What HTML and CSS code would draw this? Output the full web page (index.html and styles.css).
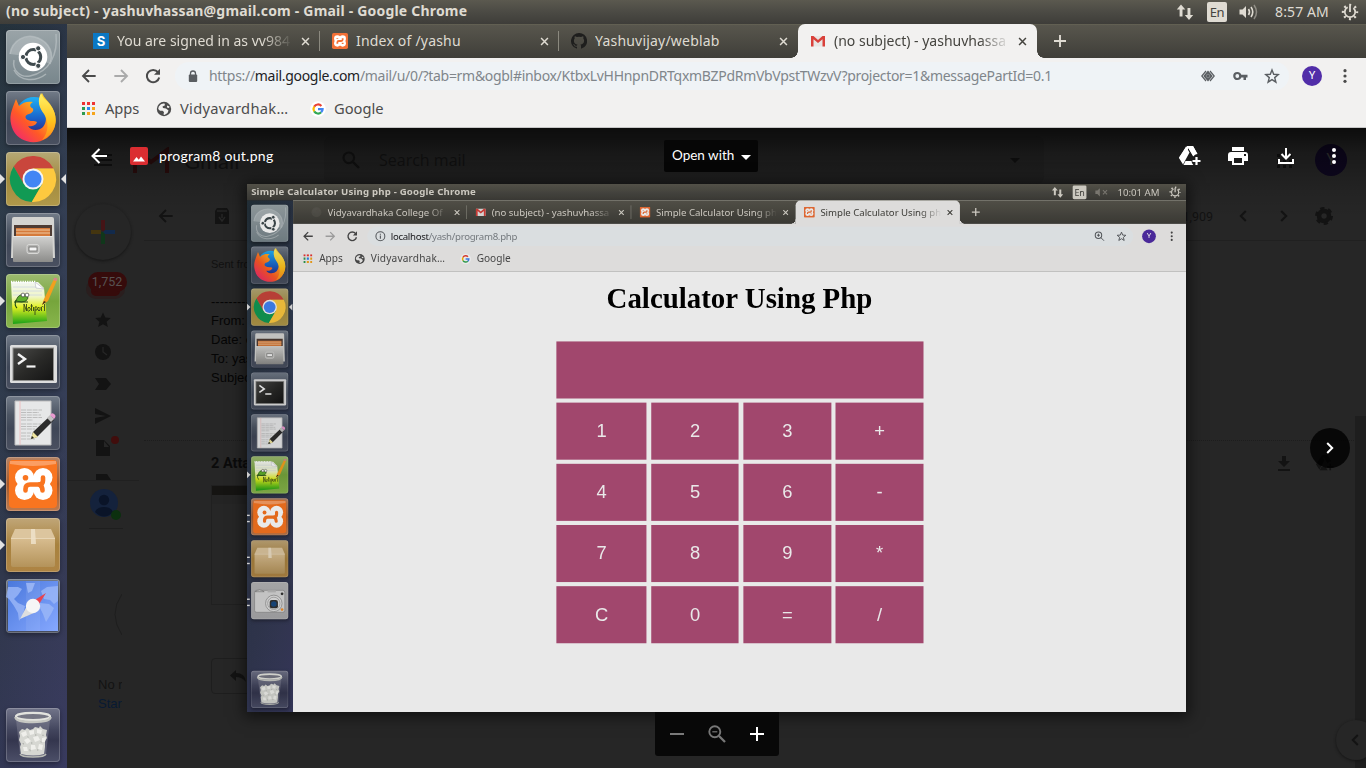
FILE: index.html
```html
<!DOCTYPE html>
<html lang="en">
<head>
<meta charset="utf-8">
<title>(no subject) - yashuvhassan@gmail.com - Gmail</title>
<link rel="stylesheet" href="styles.css">
</head>
<body>
<svg class="sprite" aria-hidden="true">
  <defs>
    <linearGradient id="gFox" x1="1" y1="0" x2="0.1" y2="1"><stop offset="0" stop-color="#fff24a"/><stop offset=".35" stop-color="#ffb21c"/><stop offset=".65" stop-color="#ff5a26"/><stop offset="1" stop-color="#f0207a"/></linearGradient>
    <linearGradient id="gTail" x1="0" y1="0" x2="0" y2="1"><stop offset="0" stop-color="#fff36a"/><stop offset=".6" stop-color="#ffc21c"/><stop offset="1" stop-color="#ff8a1c"/></linearGradient>
    <linearGradient id="gGlobe" x1="0" y1="0" x2="0" y2="1"><stop offset="0" stop-color="#1fb0f5"/><stop offset=".6" stop-color="#1a62c9"/><stop offset="1" stop-color="#2a2a86"/></linearGradient>
    <linearGradient id="gSteel" x1="0" y1="0" x2="0" y2="1"><stop offset="0" stop-color="#d2d2d0"/><stop offset="1" stop-color="#8c8c8a"/></linearGradient>
    <linearGradient id="gNote" x1="0" y1="0" x2="0" y2="1"><stop offset="0" stop-color="#f2f6f0"/><stop offset=".35" stop-color="#f0f6c8"/><stop offset=".6" stop-color="#e2f020"/><stop offset="1" stop-color="#18a018"/></linearGradient>
    <linearGradient id="gTerm" x1="0" y1="0" x2="1" y2="1"><stop offset="0" stop-color="#4a4a48"/><stop offset=".5" stop-color="#2a2a28"/><stop offset="1" stop-color="#141414"/></linearGradient>
    <linearGradient id="gBox" x1="0" y1="0" x2="0" y2="1"><stop offset="0" stop-color="#d8bd90"/><stop offset="1" stop-color="#b4935a"/></linearGradient>
    <linearGradient id="gMap" x1="0" y1="0" x2="1" y2="1"><stop offset="0" stop-color="#4a78dc"/><stop offset="1" stop-color="#86a8ff"/></linearGradient>
  </defs>

  <symbol id="app-dash" viewBox="0 0 54 54">
    <g fill="none" stroke="#b4bcbf" stroke-width="1.5" opacity=".8"><path d="M4 24C6 10 20 3 32 8c12 5 16 16 12 26"/><path d="M50 4c2 20-6 38-26 42C14 48 6 40 8 30"/><path d="M8 40c6 12 22 12 32 4"/></g>
    <path d="M4 24C6 10 20 3 32 8c12 5 16 16 12 26L27 27z" fill="#c3cacc" opacity=".45"/>
    <circle cx="27" cy="27" r="14.3" fill="#fff"/>
    <circle cx="27.3" cy="27" r="7.4" fill="none" stroke="#3f4a4e" stroke-width="3" stroke-dasharray="13.3 2.2" stroke-dashoffset="6.6"/>
    <g fill="#3f4a4e" stroke="#fff" stroke-width="1"><circle cx="17" cy="27" r="2.600"/><circle cx="32.200" cy="18.300" r="2.600"/><circle cx="32.200" cy="35.800" r="2.600"/></g>
  </symbol>
  <symbol id="app-firefox" viewBox="0 0 54 54">
    <circle cx="28" cy="24" r="18" fill="url(#gGlobe)"/>
    <path d="M10 8l3 7c4-4 9-5 14-4-3 2-4 4-1 6 2 1 2 4-3 6-5 1-4 5-1 6 4 2 6 0 9 2-1 4-7 5-9 4 3 5 11 5 15 1 5-6 3-14-2-19-3-6-2-11 1-15 2 5 6 8 8 11 9 12 7 26-3 34-12 8-28 4-34-8-5-12-2-18 3-31z" fill="url(#gFox)"/>
    <path d="M35 2c1 6 7 8 10 13 9 13 4 29-9 34 7-8 7-18 2-26-5-7-7-13-3-21z" fill="url(#gTail)"/>
  </symbol>
  <symbol id="app-chrome" viewBox="0 0 54 54">
    <path d="M7.7 14.5A23 23 0 0 1 47.5 16.5H27L17.9 32.25z" fill="#c9463c"/>
    <path d="M25.8 50A23 23 0 0 1 7.7 14.5L17.9 32.25H36.1z" fill="#119a54"/>
    <path d="M27 16.5H47.5A23 23 0 0 1 25.8 50L36.1 32.25z" fill="#fdc93f"/>
    <circle cx="27" cy="27" r="10.5" fill="#f5f5f2"/><circle cx="27" cy="27" r="8.6" fill="#4285f4"/>
  </symbol>
  <symbol id="app-files" viewBox="0 0 54 54">
    <path d="M6 6q0-2 2-2h38q2 0 2 2l1 39H5z" fill="#d4d4d1"/><path d="M8 12h38v13H8z" fill="#4e3c34"/>
    <path d="M10 15h34v8H10z" fill="#d57a3a"/><path d="M10 17h34M10 20h34" stroke="#f0c9a0" stroke-width="1"/>
    <path d="M7 23h39.5l.5 25q0 1-1 1H8q-1 0-1-1z" fill="url(#gSteel)"/><path d="M7 23.500h39.500" stroke="#e6e6e4"/>
    <rect x="21" y="31.500" width="12" height="9" rx="2" fill="#b4b4b2" stroke="#d8d8d6"/><rect x="23" y="34" width="8" height="4" fill="#f4f4f4" stroke="#6a6a68" stroke-width=".8"/>
  </symbol>
  <symbol id="app-notepad" viewBox="0 0 54 54">
    <path d="M5 8h27l6 6 3 33-34 3z" fill="url(#gNote)"/><path d="M5 8h25" stroke="#fff" stroke-width="2.500" stroke-dasharray="1.300 1"/>
    <path d="M7 13h28M7 17h29M7 21h29" stroke="#cfd8e2" stroke-width=".8"/><path d="M29 8l9 7-8-1z" fill="#fff" stroke="#aab" stroke-width=".5"/>
    <path d="M10 27q2-7 7-6 4-1 5 3l-2 3q-4 2-10 0z" fill="#5fae2c" stroke="#1e4a14" stroke-width=".8"/><path d="M10 26q-2 5 1 8M8 28h14" fill="none" stroke="#1e4a14" stroke-width="1.100"/><circle cx="17" cy="21" r="1.900" fill="#fff" stroke="#222" stroke-width=".6"/><circle cx="21" cy="21" r="1.900" fill="#fff" stroke="#222" stroke-width=".6"/>
    <path d="M18 38v-8l2.500 7v-7m1.500 4q1-2 2 0t-1 3-1-3m3.500-4v7m-1-5h2.500m.5 1v4m1.500-4v8m0-8q3-1 2 3h-2m4-3q-2 1-1 3t2 0v-3m1.500 4v-4q1-1 2 0m1-3v7" fill="none" stroke="#344618" stroke-width=".9"/>
    <path d="M36 31l2-6L48 5l3 1-9 21z" fill="#f2a01e"/><path d="M47 6l1.500-2.500 3 1L50.500 7z" fill="#d8848a"/><path d="M36 31l2-4 2 1z" fill="#3a2a1a"/>
  </symbol>
  <symbol id="app-terminal" viewBox="0 0 54 54">
    <rect x="4" y="10" width="47" height="38" rx="1.500" fill="#dedede"/><rect x="7" y="13" width="40.500" height="32.500" fill="url(#gTerm)" stroke="#8e8e8c"/>
    <path d="M12 19l7 5-7 5" fill="none" stroke="#f4f4f4" stroke-width="2.400"/><path d="M20.500 31.500h9" stroke="#f4f4f4" stroke-width="2.200"/>
  </symbol>
  <symbol id="app-editor" viewBox="0 0 54 54">
    <path d="M9 5h36v44H9z" fill="#e6e7e8" stroke="#bcbcbc"/><path d="M14 5v44" stroke="#efb8b8" stroke-width=".8"/><path d="M15 14h21M15 16.500h18M15 19h20M15 21.500h21M15 24h12M15 28h20M15 30.500h16M15 33h14M15 37h10M15 40h9M15 43h14" stroke="#b8b8b8" stroke-width=".9" stroke-dasharray="5 .8"/>
    <path d="M25 43l2-7 17-16 4 4-17 17z" fill="#2c2c2c"/><path d="M25 43l2-7 5 5z" fill="#f0e6a0"/><path d="M25 43l1-3 2 2z" fill="#222"/><path d="M41 22l3-3 4 4-3 3z" fill="#c0c0c0"/><path d="M44 19q2-3 4-1 3 2 0 5z" fill="#e89ad0"/>
  </symbol>
  <symbol id="app-xampp" viewBox="0 0 54 54">
    <rect x="3" y="3" width="48" height="48" rx="4" fill="#f97520"/>
    <path d="M4 4h46v3Q27 11 4 7z" fill="#fff" opacity=".3"/>
    <g fill="#fff"><circle cx="18.500" cy="20.500" r="9.500"/><circle cx="37" cy="20.500" r="9.500"/><circle cx="18.500" cy="33.500" r="9.500"/><circle cx="37" cy="33.500" r="9.500"/><path d="M18 18.500h20v17H18z"/></g>
    <g fill="none" stroke="#f97520" stroke-width="4.600" stroke-linecap="round"><path d="M19.500 33.500v-1.500q0-4.500 4.500-4.500h9q4 0 4-4v-3"/><path d="M36.500 33.500q0-4-3-6"/></g><circle cx="19.500" cy="20.800" r="2.800" fill="#f97520"/>
  </symbol>
  <symbol id="app-package" viewBox="0 0 54 54">
    <path d="M9 11h36l4 9H5z" fill="#dcc59e"/><path d="M5 20h44v27q0 2-2 2H7q-2 0-2-2z" fill="url(#gBox)"/><path d="M5 20.500h44" stroke="#e8d6b6"/><path d="M25 11h4l1 15h-5z" fill="#efe2ca" opacity=".85"/>
  </symbol>
  <symbol id="app-map" viewBox="0 0 54 54">
    <rect x="2" y="2" width="50" height="50" fill="url(#gMap)"/>
    <path d="M2 8h10l4 2-4 6-4 4 4 4 7 3-2 9-4 6-1-8-4-7-5-7-3-2zM20 4h9l-3 8-4 2zM35 12l6-4 11-1v15l-4 3-4-4-6-1zM34 24l9 1 5 4-3 6-5 8-3-8-3-6z" fill="#9cb8f8" opacity=".8"/><path d="M20 2h14v50H20z" fill="#fff" opacity=".07"/>
    <path d="M14 40l8-15 8 8z" fill="#dedede"/><path d="M40 14L24 24l6 6z" fill="#e84350"/><circle cx="27" cy="27" r="7.200" fill="#f6f6f6"/>
  </symbol>
  <symbol id="app-camera" viewBox="0 0 54 54">
    <rect x="5" y="12" width="44" height="32" rx="3" fill="#d6d6d6" stroke="#8a8a8a"/><path d="M6 14q6-5 13 0z" fill="#eee" stroke="#777"/><rect x="24" y="12" width="12" height="3" fill="#bbb"/>
    <circle cx="33" cy="31" r="12" fill="#e2e2e2" stroke="#888"/><circle cx="33" cy="31" r="9" fill="none" stroke="#999"/><rect x="27" y="26" width="12" height="12" rx="3" fill="#333"/><circle cx="33" cy="32" r="4" fill="#1a4a80"/><circle cx="45" cy="17" r="2" fill="#333"/><circle cx="45" cy="40" r="2" fill="#f09030"/>
  </symbol>
  <symbol id="app-trash" viewBox="0 0 54 54">
    <path d="M10 12l4 34q1 3 13 3t13-3l4-34z" fill="#9a9caa" opacity=".35"/>
    <path d="M13 24l3-3 3 1 2-2 3 2 3-1 2-2 4 1 1-2 3 3 4 1-1 5 1 3-2 3v6l-1 7q-10 3-23 0l-1-7 1-3-2-4 1-4z" fill="#d6d7d2"/>
    <g fill="#efefeb"><path d="M15 25l5-2 1 4-4 2zM23 23l5-1 0 4-4 1zM31 21l5 1-1 4-4-1zM18 32l4-2 3 3-4 3zM27 29l5-1 2 4-5 2zM36 30l4-1-1 5-3 0zM17 39l4 0 1 4-4 0zM25 37l4 0 1 4-5 1zM33 36l4 1-1 5-4-1z"/></g>
    <g fill="#b4b6b1"><path d="M21 28l2 1-1 1zM29 26l2 1-2 1zM16 35l2 0 0 2zM25 34l2 1-2 1zM34 33l2 1-1 1zM23 41l2 1-1 2zM31 41l2 1-2 1zM37 26l1 2-2 0z"/></g>
    <ellipse cx="27" cy="8.500" rx="17" ry="3.600" fill="#767784" stroke="#e2e3de" stroke-width="2.200"/><path d="M9.500 9q0 5 17.500 5t17.500-5" fill="none" stroke="#c6c7c2" stroke-width="2.400"/><path d="M14 46q1 3 13 3t13-3" fill="none" stroke="#b8bab4" stroke-width="1.500"/>
  </symbol>

  <symbol id="net" viewBox="0 0 18 18"><path d="M5 1.500L.8 6.500h2.800v7h2.900v-7h2.800zM13 17l4.200-5h-2.800V5h-2.900v7H8.800z" fill="currentColor"/></symbol>
  <symbol id="vol" viewBox="0 0 20 18"><path d="M.5 6.500h3L7 3v12l-3.500-3.500h-3z" fill="currentColor"/><path d="M9.500 6q2 3 0 6M12 4q3.500 5 0 10" fill="none" stroke="currentColor" stroke-width="1.600"/><path d="M15 2q5 7 0 14" fill="none" stroke="currentColor" stroke-width="1.500" opacity=".45"/></symbol>
  <symbol id="mute" viewBox="0 0 20 18"><path d="M1 6.500h3L7.500 3v12L4 11.500H1z" fill="currentColor"/><path d="M12 6l6 6m0-6l-6 6" stroke="currentColor" stroke-width="1.500"/></symbol>
  <symbol id="power" viewBox="0 0 18 18"><circle cx="9" cy="9" r="5.200" fill="none" stroke="currentColor" stroke-width="1.700" stroke-dasharray="26.700 6" stroke-dashoffset="-27.500"/><path d="M9 2.500v6.500" stroke="currentColor" stroke-width="1.800"/><circle cx="9" cy="9" r="7" fill="none" stroke="currentColor" stroke-width="2.400" stroke-dasharray="2 3.498" stroke-dashoffset="1"/></symbol>
  <symbol id="back" viewBox="0 0 24 24"><path d="M22 12H3M12 3l-9 9 9 9" fill="none" stroke="currentColor" stroke-width="2.800"/></symbol>
  <symbol id="forward" viewBox="0 0 24 24"><path d="M2 12h19M12 3l9 9-9 9" fill="none" stroke="currentColor" stroke-width="2.800"/></symbol>
  <symbol id="reload" viewBox="0 0 16 16"><path d="M13 4.200A6.200 6.200 0 1 0 14.200 9.500" fill="none" stroke="currentColor" stroke-width="2"/><path d="M15 .8v6H9z" fill="currentColor"/></symbol>
  <symbol id="close" viewBox="0 0 10 10"><path d="M1.200 1.200l7.600 7.600m0-7.600L1.200 8.800" stroke="currentColor" stroke-width="1.700"/></symbol>
  <symbol id="plus" viewBox="0 0 12 12"><path d="M6 0v12M0 6h12" stroke="currentColor" stroke-width="1.900"/></symbol>
  <symbol id="lock" viewBox="0 0 10 13"><rect x=".8" y="4.500" width="8.400" height="7.500" rx="1" fill="currentColor"/><path d="M2.500 5V3.500a2.500 2.500 0 0 1 5 0V5" fill="none" stroke="currentColor" stroke-width="1.300"/></symbol>
  <symbol id="info" viewBox="0 0 16 16"><circle cx="8" cy="8" r="6.500" fill="none" stroke="currentColor" stroke-width="1.500"/><path d="M8 7v4.500M8 4.200v1.700" stroke="currentColor" stroke-width="1.600"/></symbol>
  <symbol id="eye" viewBox="0 0 14 12"><path d="M5 1L.8 6 5 11M9 1l4.200 5L9 11" fill="none" stroke="currentColor" stroke-width="1.200"/><path d="M7 .5l4.700 5.500L7 11.500 2.300 6z" fill="currentColor"/><circle cx="7" cy="6" r="1.800" fill="none" stroke="#a8acb0" stroke-width=".5"/></symbol>
  <symbol id="key" viewBox="0 0 15 10"><circle cx="4.300" cy="5" r="3" fill="none" stroke="currentColor" stroke-width="2.200"/><path d="M7 3.800h7.500v2.600H13V9h-2.500V6.400H7z" fill="currentColor"/></symbol>
  <symbol id="star" viewBox="0 0 16 16"><path d="M8 2l1.700 4.300 4.600.3-3.600 3 1.200 4.500L8 11.600l-3.900 2.500 1.200-4.500-3.600-3 4.600-.3z" fill="none" stroke="currentColor" stroke-width="1.400"/></symbol>
  <symbol id="star-full" viewBox="0 0 16 16"><path d="M8 .5l2.300 5 5.500.5-4.200 3.700 1.300 5.400L8 12.200l-4.900 2.900 1.300-5.400L.2 6l5.500-.5z" fill="currentColor"/></symbol>
  <symbol id="mag" viewBox="0 0 16 16"><circle cx="6.500" cy="6.500" r="4.700" fill="none" stroke="currentColor" stroke-width="1.500"/><path d="M10 10l4.500 4.500M4.300 6.500h4.400M6.500 4.300v4.400" stroke="currentColor" stroke-width="1.400"/></symbol>
  <symbol id="zoomout" viewBox="0 0 18 18"><circle cx="6.800" cy="6.800" r="5.500" fill="none" stroke="currentColor" stroke-width="1.900"/><path d="M11 11l6 6" stroke="currentColor" stroke-width="2.300"/><path d="M4.300 6.800h5" stroke="currentColor" stroke-width="1.200"/></symbol>
  <symbol id="search" viewBox="0 0 18 18"><circle cx="6.800" cy="6.800" r="5.300" fill="none" stroke="currentColor" stroke-width="2.200"/><path d="M11 11l6 6" stroke="currentColor" stroke-width="2.400"/></symbol>
  <symbol id="dots" viewBox="0 0 4 16"><g fill="currentColor"><circle cx="2" cy="2.700" r="1.600"/><circle cx="2" cy="8" r="1.600"/><circle cx="2" cy="13.300" r="1.600"/></g></symbol>
  <symbol id="apps" viewBox="0 0 13 13"><path d="M0 0h3v3H0zM5 0h3v3H5zM10 0h3v3h-3z" fill="#e33"/><path d="M0 5h3v3H0zM0 10h3v3H0z" fill="#2d9b50"/><path d="M5 5h3v3H5z" fill="#2a86f0"/><path d="M10 5h3v3h-3zM5 10h3v3H5zM10 10h3v3h-3z" fill="#f6a51c"/></symbol>
  <symbol id="globe" viewBox="0 0 16 16"><circle cx="8" cy="8" r="7.200" fill="currentColor"/><path d="M2.800 5.500Q5 2 8.500 2.600L9 4.200 6.500 5.500 7 7l3 .5 2.500 2-1 2.500-3 2-1-.5.500-2.500-1.500-1.200H4L2.200 8zM11 4.500l2.500 1-.5 1.500-2-.5z" fill="#f2f1f0"/></symbol>
  <symbol id="google" viewBox="0 0 16 16"><circle cx="8" cy="8" r="7.800" fill="#fff"/><g fill="none" stroke-width="2.200"><path d="M4.200 5.600A4.600 4.600 0 0 1 11.400 4.900" stroke="#ea4335"/><path d="M4.200 10.400a4.600 4.600 0 0 1 0-4.800" stroke="#fbbc05"/><path d="M4.200 10.400a4.600 4.600 0 0 0 7 .9" stroke="#34a853"/><path d="M8 8.100h4.600a4.600 4.600 0 0 1-1.400 3.200" stroke="#4285f4"/></g></symbol>
  <symbol id="fav-xampp" viewBox="0 0 54 54"><rect width="54" height="54" rx="6" fill="#f27036"/><g fill="#fff"><circle cx="18" cy="19" r="11"/><circle cx="36" cy="19" r="11"/><circle cx="18" cy="35" r="11"/><circle cx="36" cy="35" r="11"/></g><path d="M18 36v-4q0-5 5-5h8q5 0 5-5v-4M36 37v-4M18 18v2" fill="none" stroke="#f27036" stroke-width="6"/></symbol>
  <symbol id="fav-gmail" viewBox="0 0 16 16"><path d="M1 3h14v10.500H1z" fill="#e8e6e4"/><path d="M1 3h2.500L8 7l4.500-4H15v10.500h-2.500V6.300L8 10 3.500 6.300v7.200H1z" fill="#d9403a"/></symbol>
  <symbol id="fav-github" viewBox="0 0 16 16"><path d="M8 0a8 8 0 0 0-2.500 15.600c.4.100.5-.2.500-.4v-1.500c-2.200.5-2.700-.9-2.700-.9-.4-.9-.9-1.200-.9-1.200-.7-.5.100-.5.100-.5.800.1 1.200.8 1.200.8.700 1.200 1.900.9 2.300.7.100-.5.300-.9.500-1.100-1.800-.2-3.600-.9-3.600-4 0-.9.300-1.600.8-2.100-.1-.2-.4-1 .1-2.100 0 0 .7-.2 2.200.8a7.600 7.600 0 0 1 4 0c1.500-1 2.200-.8 2.200-.8.400 1.100.2 1.900.1 2.100.5.600.8 1.300.8 2.100 0 3.100-1.900 3.800-3.700 4 .3.300.6.800.6 1.500v2.200c0 .2.100.5.600.4A8 8 0 0 0 8 0z" fill="#1e1e1d"/></symbol>
  <symbol id="chev-r" viewBox="0 0 8 12"><path d="M1.200 1l5 5-5 5" fill="none" stroke="currentColor" stroke-width="2.100"/></symbol>
  <symbol id="chev-l" viewBox="0 0 8 12"><path d="M6.800 1l-5 5 5 5" fill="none" stroke="currentColor" stroke-width="2"/></symbol>
  <symbol id="gear" viewBox="0 0 18 18"><circle cx="9" cy="9" r="5" fill="none" stroke="currentColor" stroke-width="4.500"/><circle cx="9" cy="9" r="7.700" fill="none" stroke="currentColor" stroke-width="2.600" stroke-dasharray="4.200 3.860"/></symbol>
  <symbol id="drive" viewBox="0 0 22 20"><path d="M8 0h6l4.500 8-2.500.5-1.500 2L9.500 2 3.500 15.500 0 11.500z" fill="currentColor"/><path d="M0 12L7 .5l3.500 6L4 18.500zM8 0h6l4.300 7.700q-2.800.3-4.300 2.300zM6.500 15h6q.2 2.500 1.800 4H4.500z" fill="currentColor"/><path d="M17.500 11v8M13.500 15h8" stroke="currentColor" stroke-width="2.200"/></symbol>
  <symbol id="print" viewBox="0 0 20 18"><path d="M4 0h12v4H4zM3 5h14q3 0 3 3v6h-4v4H4v-4H0V8q0-3 3-3zm3 6v5h8v-5zm10-4v2h2V7z" fill="currentColor" fill-rule="evenodd"/></symbol>
  <symbol id="download" viewBox="0 0 16 16"><path d="M8 0v10M3.500 6L8 10.500 12.500 6M1 11v4h14v-4" fill="none" stroke="currentColor" stroke-width="2"/></symbol>
</svg>

<div class="desktop">
  <header class="panel">
    <span class="panel-title">(no subject) - yashuvhassan@gmail.com - Gmail - Google Chrome</span>
    <svg class="i18"><use href="#net"/></svg><span class="lang">En</span><svg class="vol"><use href="#vol"/></svg><span class="clock">8:57 AM</span><svg class="i18"><use href="#power"/></svg>
  </header>
  <div class="workspace">
    <nav class="launcher">
      <div class="tile dash"><svg><use href="#app-dash"/></svg></div>
      <div class="tile"><svg><use href="#app-firefox"/></svg></div>
      <div class="tile gold running focused"><svg><use href="#app-chrome"/></svg></div>
      <div class="tile"><svg><use href="#app-files"/></svg></div>
      <div class="tile green running"><svg><use href="#app-notepad"/></svg></div>
      <div class="tile"><svg><use href="#app-terminal"/></svg></div>
      <div class="tile"><svg><use href="#app-editor"/></svg></div>
      <div class="tile orange running"><svg><use href="#app-xampp"/></svg></div>
      <div class="tile brown running"><svg><use href="#app-package"/></svg></div>
      <div class="tile"><svg><use href="#app-map"/></svg></div>
      <div class="tile last"><svg><use href="#app-trash"/></svg></div>
    </nav>
    <main class="window">
      <div class="tabs">
        <div class="tab"><span class="fav-s">S</span><span class="tab-title fade">You are signed in as vv984</span><svg class="x"><use href="#close"/></svg></div>
        <div class="tab"><svg class="i16"><use href="#fav-xampp"/></svg><span class="tab-title wide">Index of /yashu</span><svg class="x"><use href="#close"/></svg></div>
        <div class="tab no-line"><svg class="i16"><use href="#fav-github"/></svg><span class="tab-title wide">Yashuvijay/weblab</span><svg class="x"><use href="#close"/></svg></div>
        <div class="tab active"><svg class="i16"><use href="#fav-gmail"/></svg><span class="tab-title fade">(no subject) - yashuvhassa</span><svg class="x"><use href="#close"/></svg></div>
        <svg class="new-tab"><use href="#plus"/></svg>
      </div>
      <div class="toolbar">
        <svg class="nav-i"><use href="#back"/></svg><svg class="nav-i off"><use href="#forward"/></svg><svg class="i16"><use href="#reload"/></svg>
        <div class="omnibox"><svg class="lock"><use href="#lock"/></svg><span class="url">https://<b>mail.google.com</b>/mail/u/0/?tab=rm&amp;ogbl#inbox/KtbxLvHHnpnDRTqxmBZPdRmVbVpstTWzvV?projector=1&amp;messagePartId=0.1</span>
          <svg class="eye"><use href="#eye"/></svg><svg class="key"><use href="#key"/></svg><svg class="i16"><use href="#star"/></svg></div>
        <span class="avatar">Y</span><svg class="dots"><use href="#dots"/></svg>
      </div>
      <div class="bookmarks">
        <svg class="i13"><use href="#apps"/></svg><span class="bm1">Apps</span><svg class="i16"><use href="#globe"/></svg><span class="bm2">Vidyavardhak…</span><svg class="i16"><use href="#google"/></svg><span class="bm3">Google</span>
      </div>
      <div class="page">
        <div class="gmail">
          <div class="g-head">
            <span class="burger"></span><svg class="g-logo" viewBox="0 0 36 26"><path d="M2 26V3l16 12L34 3v23" fill="none" stroke="#2a0c0c" stroke-width="4"/></svg><span class="g-name">Gmail</span>
            <div class="g-search"><svg class="i18"><use href="#search"/></svg><span>Search mail</span><i></i></div>
            <svg class="g-grid" viewBox="0 0 18 16"><path d="M2 2h3v3H2zM8 2h3v3H8zM14 2h3v3h-3zM2 8h3v3H2zM8 8h3v3H8zM14 8h3v3h-3zM2 13h3v3H2zM8 13h3v3H8zM14 13h3v3h-3z" fill="#111"/></svg>
            <span class="g-me">Y</span>
          </div>
          <div class="g-body">
            <div class="g-nav">
              <div class="compose"><svg viewBox="0 0 24 24"><path d="M10 0h4v12l-4-2z" fill="#451416"/><path d="M0 10h10v4H0z" fill="#44350f"/><path d="M10 12h4v12h-4z" fill="#10371b"/><path d="M12 12l2-2h10v4H14z" fill="#122a4c"/></svg></div>
              <div class="inbox"><span>1,752</span></div>
              <svg class="i16"><use href="#star-full"/></svg>
              <svg class="i16" viewBox="0 0 16 16"><circle cx="8" cy="8" r="8" fill="currentColor"/><path d="M8 3v5l4 3" fill="none" stroke="#262626" stroke-width="1.300"/></svg>
              <svg class="i16" viewBox="0 0 16 16"><path d="M0 2h11l5 6-5 6H0l4-6z" fill="currentColor"/></svg>
              <svg class="i16" viewBox="0 0 16 16"><path d="M0 0l16 8L0 16v-6l11-2L0 6z" fill="currentColor"/></svg>
              <div class="drafts"><svg class="i16" viewBox="0 0 16 16"><path d="M1 0h8l6 6v10H1zM9 1v6h5z" fill="currentColor" fill-rule="evenodd"/></svg></div>
              <svg class="more" viewBox="0 0 16 6"><path d="M1 0h11l4 6H1z" fill="currentColor"/></svg>
              <div class="g-user"><svg viewBox="0 0 28 28"><circle cx="14" cy="14" r="14" fill="#14223c"/><circle cx="14" cy="11" r="5.200" fill="#0a1428"/><path d="M5 23q2-5 9-5t9 5q-9 9-18 0z" fill="#0a1428"/></svg></div>
              <div class="g-chat"><svg class="arc" viewBox="0 0 8 44"><path d="M8 1Q-6 21 8 42" fill="none" stroke="#1e1e1e"/></svg><p>No r</p><p class="link">Star</p></div>
            </div>
            <div class="g-mail">
              <div class="g-tools"><svg class="i16"><use href="#back"/></svg><svg class="i16" viewBox="0 0 16 16"><path d="M1 3l2-3h10l2 3v13H1z" fill="currentColor"/><path d="M8 6v4M5 9l3 4 3-4M3 3h10" stroke="#262626" stroke-width="1.500" fill="none"/></svg><span class="count">1,909</span><svg class="chev"><use href="#chev-l"/></svg><svg class="chev"><use href="#chev-r"/></svg><svg class="i18"><use href="#gear"/></svg></div>
              <div class="g-text"><p class="small">Sent from</p><p>---------- Forwarded</p><p>From: Yashu</p><p>Date: on</p><p>To: yashuv</p><p>Subject:</p></div>
              <div class="g-att"><h2>2 Attachments</h2><svg class="att-dl" viewBox="0 0 12 15"><path d="M4 0h4v5h4l-6 6-6-6h4zM0 13h12v2H0z" fill="currentColor"/></svg><svg class="att-drive"><use href="#drive"/></svg></div>
              <div class="thumb"></div>
              <div class="reply"><svg viewBox="0 0 16 12"><path d="M6 0v3q9 0 10 9-4-5-10-5v4L0 5.500z" fill="currentColor"/></svg></div>
            </div>
            <div class="g-scroll"></div>
            <div class="g-side"><svg class="chev"><use href="#chev-l"/></svg></div>
          </div>
        </div>

        <div class="viewer">
          <div class="v-head">
            <svg class="v-back" viewBox="0 0 16 16"><path d="M16 8H1.500M8.500 1l-7 7 7 7" fill="none" stroke="#fff" stroke-width="2"/></svg>
            <svg class="v-img" viewBox="0 0 18 18"><rect width="18" height="18" rx="2" fill="#db2d31"/><path d="M3 14.500l3.500-4.500 2.300 2.800L11 9.500l4 5z" fill="#fff"/></svg>
            <span class="v-name">program8 out.png</span>
            <div class="open">Open with<i></i></div>
            <svg class="v-drive"><use href="#drive"/></svg><svg class="v-print"><use href="#print"/></svg><svg class="v-down"><use href="#download"/></svg><svg class="v-dots" viewBox="0 0 4 16"><g fill="#fff"><circle cx="2" cy="2" r="2"/><circle cx="2" cy="8" r="2"/><circle cx="2" cy="14" r="2"/></g></svg>
          </div>
          <div class="photo">
            <div class="desktop mini">
              <header class="panel">
                <span class="panel-title">Simple Calculator Using php - Google Chrome</span>
                <svg class="i18"><use href="#net"/></svg><span class="lang">En</span><svg class="vol muted"><use href="#mute"/></svg><span class="clock">10:01 AM</span><svg class="i18"><use href="#power"/></svg>
              </header>
              <div class="workspace">
                <nav class="launcher">
                  <div class="tile dash"><svg><use href="#app-dash"/></svg></div>
                  <div class="tile"><svg><use href="#app-firefox"/></svg></div>
                  <div class="tile gold running focused"><svg><use href="#app-chrome"/></svg></div>
                  <div class="tile"><svg><use href="#app-files"/></svg></div>
                  <div class="tile"><svg><use href="#app-terminal"/></svg></div>
                  <div class="tile"><svg><use href="#app-editor"/></svg></div>
                  <div class="tile green running"><svg><use href="#app-notepad"/></svg></div>
                  <div class="tile orange multi"><svg><use href="#app-xampp"/></svg></div>
                  <div class="tile brown multi"><svg><use href="#app-package"/></svg></div>
                  <div class="tile silver multi"><svg><use href="#app-camera"/></svg></div>
                  <div class="tile last"><svg><use href="#app-trash"/></svg></div>
                </nav>
                <div class="window">
                  <div class="tabs">
                    <div class="tab"><svg class="i16 dim"><use href="#globe"/></svg><span class="tab-title fade">Vidyavardhaka College Of</span><svg class="x"><use href="#close"/></svg></div>
                    <div class="tab"><svg class="i16"><use href="#fav-gmail"/></svg><span class="tab-title fade">(no subject) - yashuvhassa</span><svg class="x"><use href="#close"/></svg></div>
                    <div class="tab no-line"><svg class="i16"><use href="#fav-xampp"/></svg><span class="tab-title fade">Simple Calculator Using ph</span><svg class="x"><use href="#close"/></svg></div>
                    <div class="tab active"><svg class="i16"><use href="#fav-xampp"/></svg><span class="tab-title fade">Simple Calculator Using ph</span><svg class="x"><use href="#close"/></svg></div>
                    <svg class="new-tab"><use href="#plus"/></svg>
                  </div>
                  <div class="toolbar">
                    <svg class="nav-i"><use href="#back"/></svg><svg class="nav-i off"><use href="#forward"/></svg><svg class="i16"><use href="#reload"/></svg>
                    <div class="omnibox"><svg class="i16 inf"><use href="#info"/></svg><span class="url url2"><b>localhost</b>/yash/program8.php</span><svg class="i16 magi"><use href="#mag"/></svg><svg class="i16"><use href="#star"/></svg></div>
                    <span class="avatar">Y</span><svg class="dots"><use href="#dots"/></svg>
                  </div>
                  <div class="bookmarks">
                    <svg class="i13"><use href="#apps"/></svg><span class="bm1">Apps</span><svg class="i16"><use href="#globe"/></svg><span class="bm2">Vidyavardhak…</span><svg class="i16"><use href="#google"/></svg><span class="bm3">Google</span>
                  </div>
                  <div class="calc-page">
                    <h1>Calculator Using Php</h1>
                    <div class="calc">
                      <div class="display"></div>
                      <div>1</div><div>2</div><div>3</div><div>+</div>
                      <div>4</div><div>5</div><div>6</div><div>-</div>
                      <div>7</div><div>8</div><div>9</div><div>*</div>
                      <div>C</div><div>0</div><div>=</div><div>/</div>
                    </div>
                  </div>
                </div>
              </div>
            </div>
          </div>
          <div class="zoombar"><span class="minus"></span><svg class="i18"><use href="#zoomout"/></svg><svg class="zin" viewBox="0 0 14 14"><path d="M7 0v14M0 7h14" stroke="#fff" stroke-width="2"/></svg></div>
          <div class="next"><svg viewBox="0 0 8 12"><path d="M1.200 1l5 5-5 5" fill="none" stroke="#fff" stroke-width="2"/></svg></div>
        </div>
      </div>
    </main>
  </div>
</div>
</body>
</html>
```
FILE: styles.css
```css
* { box-sizing: border-box; }
body { margin: 0; overflow: hidden; font-family: "Noto Sans", "Open Sans", sans-serif; }
p, h1, h2 { margin: 0; }
svg { display: block; flex: none; }
.sprite { position: absolute; width: 0; height: 0; }
.i13 { width: 13px; height: 13px; }
.i16 { width: 16px; height: 16px; }
.i18 { width: 18px; height: 18px; }

/* Desktop shell */
.desktop { width: 1366px; height: 768px; display: flex; flex-direction: column; overflow: hidden; }
.panel { height: 24px; flex: none; display: flex; align-items: center; padding: 0 7px 0 6px; color: #dfdbd2; background: linear-gradient(#5b594f, #4b4a44 50%, #3e3d39); white-space: nowrap; }
.panel-title { flex: 1; font-size: 14px; line-height: 22px; padding-bottom: 2px; font-weight: 700; letter-spacing: .2px; }
.mini .panel-title { letter-spacing: .28px; }
.lang { width: 20px; height: 20px; margin: 0 12px 0 13px; border-radius: 2px; background: #dfdbd2; color: #45443f; font-size: 13px; line-height: 20px; text-align: center; letter-spacing: -.3px; }
.vol { width: 20px; height: 18px; }
.vol.muted { color: #85827a; }
.clock { width: 54px; margin: 0 12px 0 16px; padding-bottom: 2px; font-size: 14px; letter-spacing: .12px; }
.mini .clock { width: 63px; margin-left: 13px; letter-spacing: 0; }
.workspace { flex: 1; display: flex; min-height: 0; }

.launcher { width: 67px; flex: none; display: flex; flex-direction: column; gap: 7px; padding: 6px 0 6px 6px; background: linear-gradient(90deg, rgba(30, 50, 60, .15), rgba(70, 70, 130, .15)), linear-gradient(#26323b, #303d4b 20%, #333d50 50%, #34394f 75%, #37395a); }
.tile { position: relative; width: 54px; height: 54px; flex: none; border-radius: 4px; background: linear-gradient(#737c89, #4c5563 35%, #3f4757 60%, #4a5060); box-shadow: inset 0 0 0 1px rgba(255, 255, 255, .2), 0 2px 5px rgba(0, 0, 0, .35); }
.tile > svg { width: 54px; height: 54px; }
.tile.dash { background: linear-gradient(#9aa4a8, #78868c); }
.tile.gold { background: linear-gradient(#b5a876, #a28b3e 50%, #b0984a); }
.tile.green { background: linear-gradient(#9dbb70, #76a53c 50%, #88b54c); }
.tile.orange { background: linear-gradient(#b58364, #a85a2a 50%, #bd7a4e); }
.tile.brown { background: linear-gradient(#c0a678, #a8823e 50%, #ae8444); }
.tile.silver { background: linear-gradient(#b4b4b6, #a8a8aa); }
.tile.last { margin-top: auto; background: linear-gradient(#72758a, #43465e 40%, #34364e 60%, #4c4f68); }
.running::before { content: ""; position: absolute; left: -6px; top: 22px; border: 5px solid transparent; border-left-color: #e2e2e2; border-right: 0; }
.focused::after { content: ""; position: absolute; right: -6px; top: 22px; border: 5px solid transparent; border-right-color: #e2e2e2; border-left: 0; }
.multi::before { content: ""; position: absolute; left: -6px; top: 24px; width: 4px; height: 7px; border: solid #e2e2e2; border-width: 2px 0; }

/* Browser chrome */
.window { flex: 1; min-width: 0; display: flex; flex-direction: column; background: #f2f1f0; }
.tabs { height: 34px; flex: none; display: flex; padding-left: 14px; background: linear-gradient(#6b6958 0, #58564d 1px, #3f3e39); color: #dfdbd2; }
.tab { position: relative; width: 239px; display: flex; align-items: center; padding: 0 10px 0 12px; }
.tab:not(.no-line):not(.active)::after { content: ""; position: absolute; right: 0; top: 7px; width: 1px; height: 20px; background: #8b897f; }
.tab-title { width: 176px; margin: 0 8px; overflow: hidden; white-space: nowrap; font-size: 14px; line-height: 22px; letter-spacing: 0; }
.tab-title.wide { letter-spacing: .2px; }
.mini .tab-title { letter-spacing: -.05px; }
.fade { -webkit-mask-image: linear-gradient(90deg, #000 145px, transparent 176px); mask-image: linear-gradient(90deg, #000 145px, transparent 176px); }
.x { width: 9px; height: 9px; }
.dim { opacity: .06; }
.tab.active { background: #f2f1f0; border-radius: 7px 7px 0 0; color: #45443f; }
.tab.active::before, .tab.active::after { content: ""; position: absolute; bottom: 0; width: 7px; height: 7px; }
.tab.active::before { left: -7px; background: radial-gradient(circle at 0 0, transparent 6.5px, #f2f1f0 7px); }
.tab.active::after { right: -7px; background: radial-gradient(circle at 100% 0, transparent 6.5px, #f2f1f0 7px); }
.fav-s { width: 16px; height: 16px; background: #0b78c4; color: #fff; font: 700 13px/16px Inter, sans-serif; text-align: center; }
.new-tab { width: 12px; height: 12px; margin: 11px 0 0 17px; }
.toolbar { height: 37px; flex: none; display: flex; align-items: center; padding: 0 0 1px 14px; color: #4a4a4a; }
.nav-i { width: 16px; height: 16px; margin-right: 16px; }
.nav-i.off { color: #aaa; }
.omnibox { width: 1114px; height: 28px; margin: 0 13px 0 14px; padding: 0 9px 0 13px; display: flex; align-items: center; border-radius: 14px; background: #eff3f6; color: #5a5e62; }
.lock { width: 10px; height: 13px; }
.url { flex: 1; margin-left: 11px; padding-bottom: 1px; white-space: nowrap; font-size: 14px; color: #80868b; letter-spacing: -.303px; }
.url b { font-weight: 400; color: #202124; }
.inf { margin-left: -2px; }
.url2 { margin-left: 7px; letter-spacing: -.42px; }
.eye { width: 14px; height: 12px; margin-right: 18px; }
.key { width: 15px; height: 10px; margin-right: 16px; }
.magi { margin-right: 16px; }
.avatar { width: 20px; height: 20px; border-radius: 50%; background: #512da8; color: #fff; font: 11px/20px Roboto, sans-serif; text-align: center; }
.dots { width: 4px; height: 16px; margin-left: 21px; }
.bookmarks { height: 33px; flex: none; display: flex; align-items: center; padding: 0 0 5px 15px; border-bottom: 1px solid #c6c6c6; color: #4c4c4c; font-size: 14.700px; line-height: 22px; white-space: nowrap; }
.bm1, .bm2, .bm3 { padding-bottom: 1px; }
.bm1 { width: 35px; margin: 0 16px 0 10px; letter-spacing: -.05px; }
.bm2 { width: 109px; margin: 0 21px 0 8px; letter-spacing: .28px; }
.bm3 { margin-left: 8px; }

/* Mail page under the viewer */
.page { position: relative; flex: 1; overflow: hidden; background: #262626; }
.gmail { position: absolute; inset: 0; color: #131313; display: flex; flex-direction: column; }
.g-head { height: 64px; display: flex; align-items: center; padding-left: 27px; background: #262626; }
.burger { width: 18px; height: 12px; border: solid #111; border-width: 2px 0; background: linear-gradient(#111, #111) 0 3px / 18px 2px no-repeat; }
.g-logo { width: 36px; height: 26px; margin: 0 15px 0 21px; }
.g-name { width: 140px; font: 22px Lato, sans-serif; color: #131313; }
.g-search { width: 720px; height: 48px; border-radius: 8px; padding: 0 24px 0 18px; display: flex; align-items: center; background: #232323; font: 16px "Open Sans", sans-serif; }
.g-search span { flex: 1; margin-left: 19px; }
.g-search i { border: 5px solid transparent; border-top-color: #111; border-bottom: 0; }
.g-grid { width: 18px; height: 16px; margin-left: 231px; }
.g-me { width: 32px; height: 32px; margin-left: 22px; border-radius: 50%; background: #0e0720; color: #333; font: 16px/32px Roboto, sans-serif; text-align: center; }
.g-body { flex: 1; display: flex; position: relative; }
.g-nav { width: 72px; display: flex; flex-direction: column; align-items: center; padding-top: 12px; }
.compose { width: 56px; height: 56px; border-radius: 50%; display: grid; place-items: center; box-shadow: 0 1px 3px #151515; }
.compose svg { width: 24px; height: 24px; }
.inbox { width: 39px; height: 20px; margin: 12px 0 20px 8px; border-radius: 10px; background: #360b0b; color: #575252; font: 12.500px/20px Roboto, sans-serif; text-align: center; box-shadow: -2px 9px 0 -5px #360b0b, -2px 7px 0 0 #2a1e1e; }
.g-nav > .i16 { margin-bottom: 16px; }
.drafts { position: relative; margin-bottom: 17px; }
.drafts::after { content: ""; position: absolute; right: -8px; top: -4px; width: 8px; height: 8px; border-radius: 50%; background: #410d0c; }
.more { width: 16px; height: 6px; margin-top: 1px; }
.g-user { position: relative; width: 72px; padding: 8px 0 0 23px; border-top: 1px solid #202020; }
.g-user svg { width: 28px; height: 28px; }
.g-user::after { content: ""; position: absolute; left: 44px; top: 29px; width: 10px; height: 10px; border-radius: 50%; background: #0c300f; }
.g-chat { width: 34px; margin: 11px 0 0 6px; border-top: 1px solid #1e1e1e; font: 13px/19px "Liberation Sans", Arial, sans-serif; overflow: hidden; }
.g-chat p { margin-left: 9px; white-space: nowrap; width: 24px; overflow: hidden; }
.g-chat .link { color: #081a33; }
.arc { width: 8px; height: 44px; margin: 64px 0 38px 25px; }
.g-mail { flex: 1; padding-left: 5px; }
.g-tools { height: 49px; display: flex; align-items: center; padding: 0 33px 0 14px; border-bottom: 1px solid #202020; font: 12.500px Roboto, sans-serif; }
.g-tools > .i16 + .i16 { margin-left: 40px; }
.g-tools .count { margin: 0 26px 0 auto; }
.chev { width: 8px; height: 12px; }
.g-tools .chev { margin-right: 33px; }
.g-tools .chev + .chev { margin-right: 27px; }
.g-text { height: 200px; padding: 14px 0 0 67px; border-bottom: 1px dotted #1d1d1d; font: 13px/19px "Liberation Sans", Arial, sans-serif; color: #050505; white-space: nowrap; }
.g-text .small { margin-bottom: 18px; font-size: 11px; color: #111; }
.g-att { height: 44px; display: flex; align-items: center; padding: 0 32px 0 67px; }
.g-att h2 { flex: 1; font: 700 14.500px Roboto, sans-serif; color: #0b0b0b; }
.att-dl { width: 12px; height: 15px; }
.att-drive { width: 18px; height: 16px; margin-left: 26px; }
.thumb { width: 180px; height: 120px; margin-left: 67px; border: 1px solid #202020; background: linear-gradient(#151412 9px, #242424 9px, #242424 18px, transparent 18px); }
.reply { width: 110px; height: 36px; margin: 53px 0 0 67px; padding: 11px 18px; border: 1px solid #1e1e1e; border-radius: 4px; }
.reply svg { width: 16px; height: 12px; }
.g-scroll { position: absolute; right: 0; top: 224px; bottom: 0; width: 11px; background: #1e1e1e; }
.g-side { position: absolute; right: -10px; top: 528px; width: 40px; height: 40px; padding: 14px 10px 14px 15px; border-radius: 50%; background: #262626; box-shadow: 0 1px 3px #151515; }

/* Attachment viewer */
.viewer { position: absolute; inset: 0; display: flex; flex-direction: column; align-items: center; background: linear-gradient(rgba(0, 0, 0, .68), rgba(0, 0, 0, .32) 25px, rgba(0, 0, 0, .08) 64px, transparent 90px); }
.v-head { width: 100%; height: 56px; flex: none; display: flex; align-items: center; padding: 0 30px 0 24px; color: #fff; }
.v-back { width: 16px; height: 16px; margin-right: 23px; }
.v-img { width: 18px; height: 18px; }
.v-name { width: 505px; margin-left: 11px; padding-bottom: 2px; font: 14px Lato, sans-serif; letter-spacing: .28px; }
.open { width: 94px; height: 32px; margin: 0 auto 0 0; padding: 0 0 2px 8px; display: flex; align-items: center; background: #060606; border-radius: 2px; font: 13.500px Lato, sans-serif; }
.open i { margin: 4px 0 0 7px; border: 5px solid transparent; border-top-color: #fff; border-bottom: 0; }
.v-drive { width: 22px; height: 20px; margin-right: 27px; }
.v-print { width: 20px; height: 18px; margin-right: 30px; }
.v-down { width: 16px; height: 16px; margin-right: 38px; }
.v-dots { width: 4px; height: 16px; }
.photo { position: relative; width: 939px; height: 528px; flex: none; overflow: hidden; }
.photo::after { content: ""; position: absolute; inset: 0; background: rgba(0, 0, 0, .087); }
.viewer::before { content: ""; position: absolute; left: 180px; top: 56px; width: 939px; height: 528px; box-shadow: 0 2px 14px 3px rgba(0, 0, 0, .55); }
.mini { transform: scale(.6875); transform-origin: 0 0; }
.zoombar { width: 124px; height: 44px; flex: none; display: flex; align-items: center; padding: 0 15px; background: #080808; border-radius: 0 0 3px 3px; color: #777; z-index: 1; }
.minus { width: 14px; height: 2px; background: #7a7a7a; margin-right: 24px; }
.zin { width: 14px; height: 14px; margin-left: 24px; }
.next { position: absolute; right: 16px; top: 300px; width: 40px; height: 40px; border-radius: 50%; background: rgba(0, 0, 0, .8); display: grid; place-items: center; }
.next svg { width: 8px; height: 12px; }

/* Calculator */
.calc-page { flex: 1; background: #fff; padding: 13px 315px 0 383px; }
.calc-page h1 { font: 700 42px/50px "Liberation Serif", "Times New Roman", serif; color: #000; white-space: nowrap; padding-left: 73px; }
.calc { display: grid; grid-template-columns: 131.300px 127.400px 127.400px 127.400px; grid-auto-rows: 83.300px; gap: 5.600px 6.800px; margin-top: 38px; color: #fff; font: 26.700px "Liberation Sans", Arial, sans-serif; }
.calc > div { display: grid; place-items: center; background: #b14e78; }
.calc .display { grid-column: 1 / -1; }
```
